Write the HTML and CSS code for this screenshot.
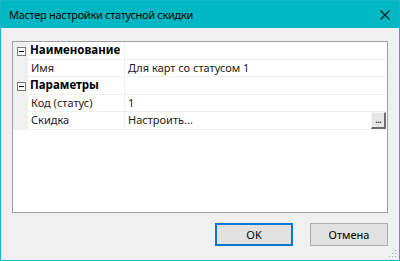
FILE: index.html
```html
<!DOCTYPE html>
<html>
<head>
<meta charset="utf-8">
<link rel="stylesheet" href="styles.css">
</head>
<body>
<div class="window">
  <div class="titlebar">
    <span class="title">Мастер настройки статусной скидки</span>
    <svg class="close" width="10" height="10" viewBox="0 0 10 10"><path d="M0.5 0.5 L9.5 9.5 M9.5 0.5 L0.5 9.5" stroke="#1b1b1b" stroke-width="1.1" fill="none"/></svg>
  </div>
  <div class="content">
    <div class="grid">
      <div class="row cat">
        <div class="margin"><span class="box"></span></div>
        <div class="label">Наименование</div>
        <div class="value"></div>
      </div>
      <div class="row">
        <div class="margin"></div>
        <div class="label">Имя</div>
        <div class="value">Для карт со статусом 1</div>
      </div>
      <div class="row cat">
        <div class="margin"><span class="box"></span></div>
        <div class="label">Параметры</div>
        <div class="value"></div>
      </div>
      <div class="row">
        <div class="margin"></div>
        <div class="label">Код (статус)</div>
        <div class="value">1</div>
      </div>
      <div class="row">
        <div class="margin"></div>
        <div class="label">Скидка</div>
        <div class="value"><span class="vtext">Настроить...</span><span class="dots">...</span></div>
      </div>
      <div class="rest"><div class="margin"></div><div class="fill"></div></div>
    </div>
    <div class="buttons">
      <div class="btn default">OK</div>
      <div class="btn">Отмена</div>
    </div>
  </div>
  <svg class="grip" width="8" height="8" viewBox="0 0 8 8">
    <rect x="6" y="0" width="1" height="1" fill="#9c9c9c"/>
    <rect x="3" y="3" width="1" height="1" fill="#9c9c9c"/>
    <rect x="6" y="3" width="1" height="1" fill="#9c9c9c"/>
    <rect x="0" y="6" width="1" height="1" fill="#9c9c9c"/>
    <rect x="3" y="6" width="1" height="1" fill="#9c9c9c"/>
    <rect x="6" y="6" width="1" height="1" fill="#9c9c9c"/>
  </svg>
</div>
</body>
</html>
```

FILE: styles.css
```css
html, body {
  margin: 0;
  padding: 0;
}
body {
  font-family: "Noto Sans", "Liberation Sans", sans-serif;
  font-size: 11px;
  color: #000;
  background: #f0f0f0;
}
.window {
  position: relative;
  width: 400px;
  height: 261px;
  box-sizing: border-box;
  border: 1px solid #17b8c6;
  background: #f0f0f0;
  display: flex;
  flex-direction: column;
}
.titlebar {
  height: 27px;
  background: #00b7c3;
  display: flex;
  align-items: center;
  justify-content: space-between;
  padding: 0 9px 0 8px;
  flex: none;
}
.title {
  color: #000;
  letter-spacing: -0.3px;
}
.close {
  display: block;
}
.content {
  flex: 1;
  padding: 13px 11px 0 11px;
  display: flex;
  flex-direction: column;
}
.grid {
  height: 172px;
  box-sizing: border-box;
  border: 1px solid #a0a0a0;
  background: #fff;
  display: flex;
  flex-direction: column;
}
.row {
  height: 17.5px;
  display: flex;
  flex: none;
}
.margin {
  width: 15px;
  flex: none;
  background: #f0f0f0;
  position: relative;
}
.label {
  width: 97px;
  flex: none;
  box-sizing: border-box;
  padding-left: 3px;
  border-right: 1px solid #f0f0f0;
  border-bottom: 1px solid #f0f0f0;
  line-height: 16px;
  white-space: nowrap;
  color: #1a1a1a;
}
.value {
  flex: 1;
  box-sizing: border-box;
  padding-left: 3px;
  border-bottom: 1px solid #f0f0f0;
  line-height: 16px;
  white-space: nowrap;
  display: flex;
  justify-content: space-between;
  color: #1a1a1a;
}
.cat .label {
  font-weight: bold;
  font-size: 11.5px;
  padding-left: 2px;
  overflow: visible;
  color: #000;
}
.box {
  position: absolute;
  left: 4px;
  top: 5px;
  width: 9px;
  height: 9px;
  box-sizing: border-box;
  border: 1px solid #7a7a7a;
  background: #fff;
}
.box::after {
  content: "";
  position: absolute;
  left: 1px;
  top: 3px;
  width: 5px;
  height: 1px;
  background: #000;
}
.dots {
  width: 15px;
  height: 17px;
  box-sizing: border-box;
  margin-right: 1px;
  background: #e6e6e6;
  border-top: 1px solid #f4f4f4;
  border-left: 1px solid #f4f4f4;
  border-right: 2px solid #6d6d6d;
  border-bottom: 2px solid #6d6d6d;
  font-size: 11px;
  line-height: 12px;
  text-align: center;
  color: #1a1a1a;
  letter-spacing: -1px;
  align-self: flex-start;
}
.rest {
  flex: 1;
  display: flex;
}
.fill {
  flex: 1;
}
.rest .margin {
  background: #fff;
}
.buttons {
  display: flex;
  justify-content: flex-end;
  gap: 17px;
  margin-top: 10px;
}
.btn {
  width: 78px;
  height: 23px;
  box-sizing: border-box;
  border: 1px solid #adadad;
  background: #e1e1e1;
  text-align: center;
  line-height: 21px;
  color: #000;
}
.btn.default {
  border: 2px solid #0078d7;
  line-height: 19px;
}
.grip {
  position: absolute;
  right: 2px;
  bottom: 2px;
}
```
